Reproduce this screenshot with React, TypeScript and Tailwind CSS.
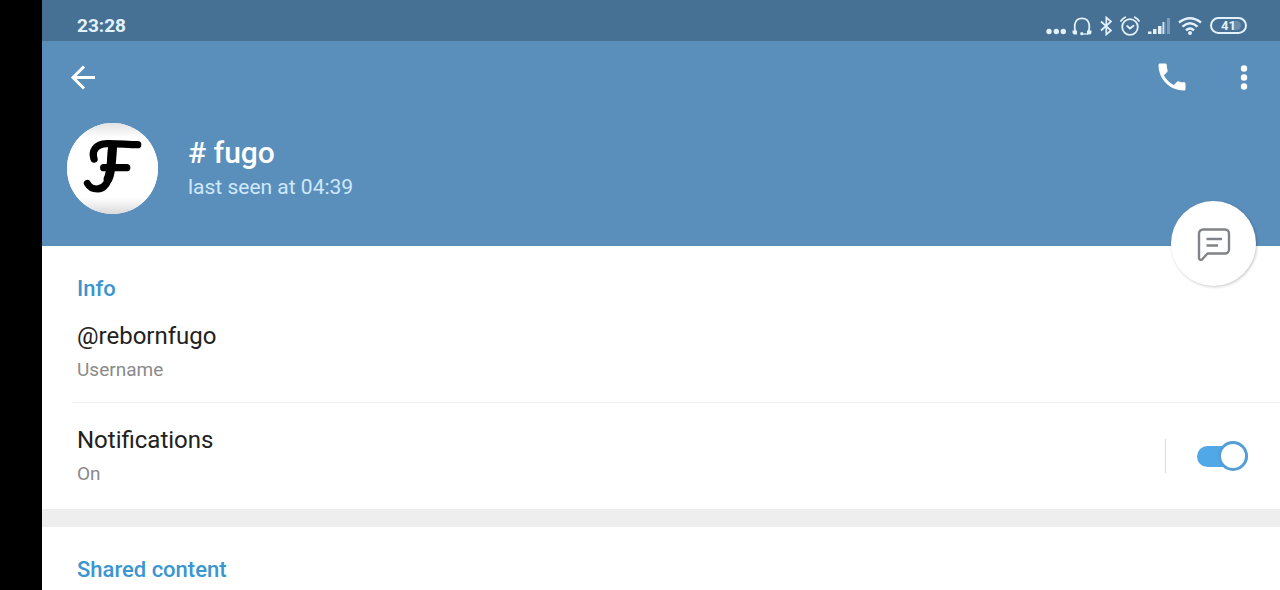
import { useState } from "react"

function StatusIcons() {
  return (
    <div className="flex h-5 items-center text-[#e3f1fc]">
      <svg className="mr-1.5 h-5 w-5" viewBox="0 0 20 20" fill="currentColor">
        <circle cx="3" cy="15.500" r="2.700" />
        <circle cx="10.300" cy="15.500" r="2.700" />
        <circle cx="17.300" cy="15.500" r="2.700" />
      </svg>
      <svg className="mr-2 h-5 w-5" viewBox="0 0 20 20" fill="none">
        <path
          d="M3.500 17Q2.300 12 2.800 8.500C3.500 4.500 6 2.300 10 2.300S16.500 4.500 17.200 8.500Q17.700 12 16.500 17"
          stroke="currentColor"
          strokeWidth="1.800"
        />
        <path
          d="M.500 14.500h4.500v4H2.500a2 2 0 0 1-2-2zM19.500 14.500h-4.500v4h2.500a2 2 0 0 0 2-2z"
          fill="currentColor"
        />
        <circle cx="9.800" cy="17.700" r="1.600" fill="currentColor" />
        <path d="M10 18h6" stroke="currentColor" strokeWidth="1.200" />
      </svg>
      <svg
        className="mr-2 h-5 w-3"
        viewBox="0 0 12 20"
        fill="none"
        stroke="currentColor"
        strokeWidth="1.700"
      >
        <path d="M1 5.500l10 9-4.700 4V1.500l4.700 4-10 9" />
      </svg>
      <svg
        className="mr-2 h-5 w-5"
        viewBox="0 0 20 20"
        fill="none"
        stroke="currentColor"
        strokeWidth="1.800"
        strokeLinecap="round"
      >
        <circle cx="10" cy="11" r="7.800" />
        <path d="M1 5Q2.500 2.500 5.200 1.300M19 5Q17.500 2.500 14.800 1.300M7.200 10l2.800 2.500 3.500-2.800" />
      </svg>
      <svg className="mr-2 h-5 w-[22px]" viewBox="0 0 22 20" fill="currentColor">
        <path d="M0 15.500h3.500v2.500H0zM5 13h3.500v5H5zM10 10h3.500v8H10z" />
        <path d="M14.500 6h3v12h-3zM19 2h3v16h-3z" opacity="0.35" />
        <path d="M14.500 6h1.500v12h-1.500z" opacity="0.8" />
      </svg>
      <svg
        className="mr-2 h-5 w-6"
        viewBox="0 0 24 20"
        fill="none"
        stroke="currentColor"
        strokeWidth="2.400"
      >
        <path d="M1 6.500q11-8.500 22 0M4.500 10.600q7.500-6.500 15 0M8 14.300q4-3.800 8 0" />
        <circle cx="12" cy="17" r="2" fill="currentColor" stroke="none" />
      </svg>
      <div className="relative flex h-[17px] w-[37px] items-center justify-center overflow-hidden rounded-full border-2 border-current">
        <span className="absolute top-0.5 right-1 h-[9px] w-2 rounded-r-full bg-white/20" />
        <span className="text-[13px] leading-none font-bold">41</span>
      </div>
    </div>
  )
}

function Avatar() {
  return (
    <div className="size-[91px] shrink-0 overflow-hidden rounded-full bg-white">
      <svg
        className="size-full"
        viewBox="50 38 273 273"
        fill="none"
        stroke="#000"
        strokeLinecap="round"
        strokeLinejoin="round"
        aria-label="# fugo"
      >
        <defs>
          <linearGradient id="avatar-bg" x1="0" y1="0" x2="0" y2="1">
            <stop offset="0" stopColor="#e2e2e2" />
            <stop offset="0.16" stopColor="#fff" />
            <stop offset="0.82" stopColor="#fff" />
            <stop offset="1" stopColor="#dadada" />
          </linearGradient>
        </defs>
        <rect x="50" y="38" width="273" height="273" fill="url(#avatar-bg)" stroke="none" />
        <path d="M131 146C124 124 134 101 170 100C200 99 232 103 262 103" strokeWidth="22" />
        <path d="M184 104C182 134 181 162 178 188C174 219 160 235 141 236C127 236 117 230 111 219" strokeWidth="21" />
        <path d="M187 106C185 134 184 160 179 186C178 193 176 200 173 206" strokeWidth="27" />
        <path d="M160 172H229" strokeWidth="22" />
      </svg>
    </div>
  )
}

function Header() {
  return (
    <header className="relative bg-[#5a8fbb] text-white">
      <div className="flex h-[41px] items-center justify-between bg-[#467195] pt-2.5 pr-[33px] pl-[35px]">
        <time className="text-[19px] leading-5 font-bold text-[#e3f1fc]">23:28</time>
        <StatusIcons />
      </div>

      <div className="flex h-18 items-center justify-between pr-6 pl-7">
        <button type="button" aria-label="Back" className="flex">
          <svg
            className="h-7 w-[26px]"
            viewBox="0 0 26 28"
            fill="none"
            stroke="currentColor"
            strokeWidth="3"
          >
            <path d="M25 14.500H3M14 3.500L3 14.500l11 11" />
          </svg>
        </button>
        <div className="flex items-center gap-[42px]">
          <button type="button" aria-label="Call" className="flex">
            <svg className="size-9" viewBox="0 0 24 24" fill="currentColor">
              <path d="M6.620 10.790c1.440 2.830 3.760 5.140 6.590 6.590l2.200-2.200c.270-.270.670-.360 1.020-.240 1.120.370 2.330.570 3.570.570.550 0 1 .450 1 1V20c0 .550-.450 1-1 1-9.390 0-17-7.610-17-17 0-.550.450-1 1-1h3.500c.550 0 1 .450 1 1 0 1.250.200 2.450.570 3.570.110.350.030.740-.250 1.020l-2.200 2.200z" />
            </svg>
          </button>
          <button type="button" aria-label="More options" className="flex">
            <svg className="h-7 w-6" viewBox="0 0 24 28" fill="currentColor">
              <circle cx="12" cy="5.500" r="3.200" />
              <circle cx="12" cy="14.500" r="3.200" />
              <circle cx="12" cy="23.500" r="3.200" />
            </svg>
          </button>
        </div>
      </div>

      <div className="flex items-center gap-[30px] px-[25px] pt-2.5 pb-8">
        <Avatar />
        <div>
          <h1 className="text-[30px] leading-9 font-medium"># fugo</h1>
          <p className="text-[21px] leading-8 text-[#cfe8fb]">last seen at 04:39</p>
        </div>
      </div>

      <button
        type="button"
        aria-label="Send message"
        className="absolute right-6 -bottom-10 flex size-[85px] items-center justify-center rounded-full bg-white text-[#808488] shadow-[1px_1px_3px_rgba(0,0,0,0.22)]"
      >
        <svg
          className="size-9"
          viewBox="0 0 36 36"
          fill="none"
          stroke="currentColor"
          strokeWidth="2.400"
          strokeLinecap="round"
          strokeLinejoin="round"
        >
          <path d="M7 3.500h22a4 4 0 0 1 4 4v16a4 4 0 0 1-4 4H11.500l-5 5.500a1.900 1.900 0 0 1-3.500-1V7.500a4 4 0 0 1 4-4z" />
          <path d="M10.500 13H26M10.500 19.500H22" strokeLinecap="butt" />
        </svg>
      </button>
    </header>
  )
}

export default function App() {
  const [notifications, setNotifications] = useState(true)

  return (
    <div className="h-screen overflow-hidden bg-black pl-[42px] font-[Roboto,sans-serif]">
      <div className="min-h-full bg-white">
        <Header />

        <section className="pt-[25px]">
          <h2 className="pl-[35px] text-[22px] leading-9 font-medium text-[#3a95d0]">Info</h2>
          <div className="ml-[30px] border-b border-[#f0f0f0] pt-[11px] pb-4 pl-[5px]">
            <p className="text-2xl leading-9 text-[#212121]">@rebornfugo</p>
            <p className="text-[19px] leading-8 text-[#8a8a8a]">Username</p>
          </div>

          <div className="flex items-center justify-between pt-[19px] pr-8 pb-[19px] pl-[35px]">
            <div>
              <label htmlFor="notifications" className="block text-2xl leading-9 text-[#212121]">
                Notifications
              </label>
              <p className="text-[19px] leading-8 text-[#8a8a8a]">
                {notifications ? "On" : "Off"}
              </p>
            </div>
            <div className="flex h-[34px] items-center border-l border-[#d9d9d9] pl-[31px]">
              <label className="relative flex h-[30px] w-[51px] cursor-pointer items-center">
                <input
                  id="notifications"
                  type="checkbox"
                  role="switch"
                  checked={notifications}
                  onChange={(e) => setNotifications(e.target.checked)}
                  className="peer absolute inset-0 cursor-pointer opacity-0"
                />
                <span className="h-[21px] w-full rounded-full bg-[#b0b5ba] peer-checked:bg-[#50a8e6]" />
                <span className="pointer-events-none absolute left-0 size-[30px] rounded-full border-3 border-[#b0b5ba] bg-white peer-checked:right-0 peer-checked:left-auto peer-checked:border-[#559fd6]" />
              </label>
            </div>
          </div>
        </section>

        <section className="border-t-18 border-[#eeeeee] pt-[25px]">
          <h2 className="pl-[35px] text-[22px] leading-9 font-medium text-[#3a95d0]">
            Shared content
          </h2>
        </section>
      </div>
    </div>
  )
}
